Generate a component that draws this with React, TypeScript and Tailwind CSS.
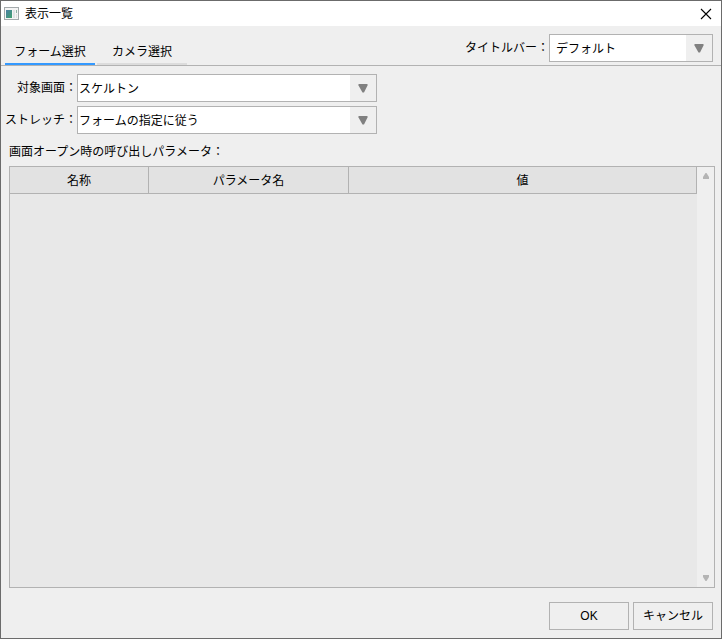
import { useState } from 'react';

type SelectBoxProps = {
  id: string;
  options: string[];
  className?: string;
  selectClassName?: string;
};

function SelectBox({ id, options, className = '', selectClassName = 'pl-px' }: SelectBoxProps) {
  return (
    <div className={`relative flex h-7 border border-[#b2b2b2] bg-white ${className}`}>
      <select id={id} className={`w-full appearance-none bg-transparent pr-7 pt-px outline-none ${selectClassName}`}>
        {options.map((option) => (
          <option key={option}>{option}</option>
        ))}
      </select>
      <span className="pointer-events-none absolute inset-y-0 right-0 flex w-[26px] items-center justify-center bg-[#efefef]">
        <svg width="10" height="10" viewBox="0 0 10 10" fill="#808080">
          <path d="M0.5 1h9v1.5L6 9.5H4.5L0.5 2.5z" />
        </svg>
      </span>
    </div>
  );
}

function WindowIcon() {
  return (
    <svg width="15" height="13" viewBox="0 0 15 13">
      <defs>
        <linearGradient id="pane" x1="0" y1="0" x2="1" y2="1">
          <stop offset="0" stopColor="#4a7fa5" />
          <stop offset="1" stopColor="#3fa06c" />
        </linearGradient>
      </defs>
      <rect x="0.5" y="0.5" width="14" height="12" fill="#f4f4f4" stroke="#a3a9ab" />
      <rect x="2" y="3" width="6" height="8" fill="url(#pane)" />
      <rect x="9" y="3" width="2" height="8" fill="#dfe3e4" />
      <rect x="12" y="3" width="1" height="3" fill="#8fb3a5" />
      <rect x="12" y="7" width="1" height="4" fill="#e0e0e0" />
    </svg>
  );
}

const tabs = ['フォーム選択', 'カメラ選択'];

export default function App() {
  const [activeTab, setActiveTab] = useState(0);

  return (
    <div className="flex min-h-screen flex-col border border-[#6b6b6b] bg-[#efefef] font-['Liberation_Sans','Noto_Sans_CJK_JP',sans-serif] text-xs text-black">
      <header className="flex h-[25px] items-center justify-between bg-white pl-[3px] pr-[7px]">
        <div className="flex items-center gap-1.5">
          <WindowIcon />
          <h1>表示一覧</h1>
        </div>
        <button aria-label="閉じる" className="flex size-4 items-center justify-center">
          <svg width="12" height="12" viewBox="0 0 12 12" fill="none" stroke="#000" strokeWidth="1.1">
            <path d="M1 1l10 10M11 1L1 11" />
          </svg>
        </button>
      </header>

      <div className="flex h-10 items-end justify-between border-b border-[#b2b2b2] pl-1 pr-2">
        <div role="tablist" className="flex gap-0.5">
          {tabs.map((tab, index) => (
            <button
              key={tab}
              role="tab"
              aria-selected={activeTab === index}
              onClick={() => setActiveTab(index)}
              className={`h-7 w-[90px] border-b-2 pt-1 ${activeTab === index ? 'border-[#3399ff]' : 'border-[#dcdcdc]'}`}
            >
              {tab}
            </button>
          ))}
        </div>
        <div className="mb-[3px] flex items-center">
          <label htmlFor="titlebar">タイトルバー：</label>
          <SelectBox id="titlebar" options={['デフォルト']} className="w-[164px]" selectClassName="pl-1.5" />
        </div>
      </div>

      <main className="flex flex-1 flex-col pl-2 pr-1.5 pt-2">
        <div className="grid grid-cols-[68px_300px] items-center gap-y-1">
          <label htmlFor="screen" className="justify-self-end whitespace-nowrap">対象画面：</label>
          <SelectBox id="screen" options={['スケルトン']} />
          <label htmlFor="stretch" className="justify-self-end whitespace-nowrap">ストレッチ：</label>
          <SelectBox id="stretch" options={['フォームの指定に従う']} />
        </div>

        <h2 id="params" className="mb-1 mt-2 leading-5">画面オープン時の呼び出しパラメータ：</h2>

        <div className="flex flex-1 border border-[#b2b2b2] bg-[#e8e8e8]">
          <div className="flex-1">
            <table aria-labelledby="params" className="w-full table-fixed border-separate border-spacing-0">
              <thead>
                <tr className="h-[27px] bg-[#e2e2e2]">
                  <th className="w-[139px] border-b border-r border-[#b2b2b2] pt-px font-normal">名称</th>
                  <th className="w-[200px] border-b border-r border-[#b2b2b2] pt-px font-normal">パラメータ名</th>
                  <th className="border-b border-r border-[#b2b2b2] pt-px font-normal">値</th>
                </tr>
              </thead>
              <tbody />
            </table>
          </div>
          <div className="flex w-[17px] flex-col items-center justify-between bg-[#efefef] py-1.5">
            <button aria-label="上へ">
              <svg width="6" height="6" viewBox="0 0 6 6" fill="#b4b4b4">
                <path d="M2.5 0h1L6 4v2H0V4z" />
              </svg>
            </button>
            <button aria-label="下へ">
              <svg width="6" height="6" viewBox="0 0 6 6" fill="#b4b4b4">
                <path d="M0 0h6v2L3.5 6h-1L0 2z" />
              </svg>
            </button>
          </div>
        </div>
      </main>

      <footer className="flex justify-end gap-1 px-2 pb-2 pt-3.5">
        <button className="h-7 w-20 border border-[#b2b2b2]">OK</button>
        <button className="h-7 w-20 border border-[#b2b2b2]">キャンセル</button>
      </footer>
    </div>
  );
}
